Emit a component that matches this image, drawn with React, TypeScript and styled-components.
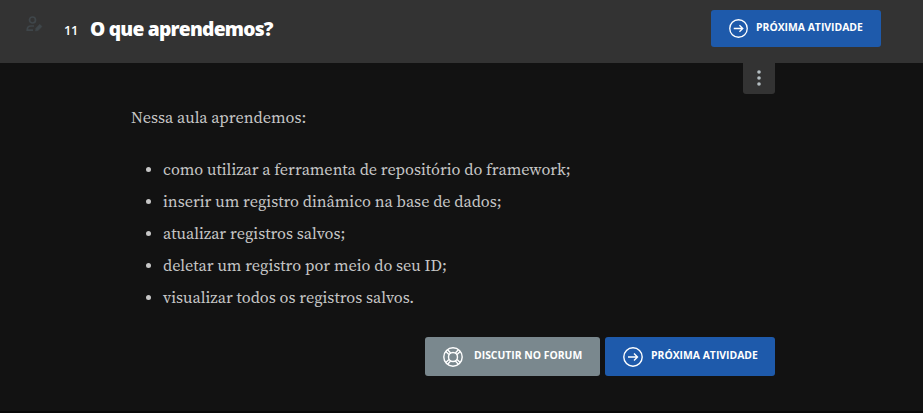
import React from "react";
import styled, { createGlobalStyle } from "styled-components";

const GlobalStyle = createGlobalStyle`
  * { box-sizing: border-box; }
  body { margin: 0; background: #121212; }
`;

const Page = styled.div`
  height: 413px;
  overflow: hidden;
  background: #121212;
  border-bottom: 2px solid #080808;
  font-family: "Open Sans", sans-serif;
`;

const Header = styled.header`
  display: flex;
  align-items: flex-start;
  height: 63px;
  padding: 10px 42px 0 25px;
  background: #333333;
`;

const EditorIcon = styled.svg`
  width: 18px;
  height: 18px;
  margin-top: 5px;
  flex: none;
`;

const Title = styled.h1`
  display: flex;
  align-items: baseline;
  flex: 1;
  margin: 5px 0 0 21px;
  color: #ffffff;
  font-size: 19.2px;
  line-height: 28px;
  font-weight: 800;
  letter-spacing: -0.75px;
`;

const TitleNumber = styled.span`
  position: relative;
  top: -1px;
  width: 26px;
  font-size: 12.8px;
  font-weight: 600;
  letter-spacing: -0.2px;
`;

const Button = styled.button<{ $tone: "primary" | "neutral"; $height: number; $width: number }>`
  display: flex;
  align-items: center;
  flex: none;
  width: ${({ $width }) => $width}px;
  height: ${({ $height }) => $height}px;
  padding: 0 0 0 18px;
  border: 0;
  border-radius: 3px;
  background: ${({ $tone }) => ($tone === "primary" ? "#1e5aab" : "#7a888e")};
  color: #ffffff;
  font: 700 10.4px/16px "Open Sans", sans-serif;
  white-space: nowrap;
`;

const ButtonIcon = styled.svg<{ $size: number; $gap: number }>`
  width: ${({ $size }) => $size}px;
  height: ${({ $size }) => $size}px;
  flex: none;
  margin-right: ${({ $gap }) => $gap}px;
  fill: none;
  stroke: currentColor;
  stroke-width: 1.4;
`;

const ButtonLabel = styled.span`
  margin-bottom: 3px;
`;

const Main = styled.main`
  width: 644px;
  margin-left: 131px;
`;

const MenuButton = styled.button`
  display: flex;
  align-items: center;
  justify-content: center;
  width: 32px;
  height: 31px;
  margin-left: auto;
  padding: 0 0 2px;
  border: 0;
  border-radius: 0 0 3px 3px;
  background: #333333;
`;

const Article = styled.article`
  padding-top: 7px;
  color: #c6c6c6;
  font: 16.2px/32px "Source Serif Pro", "Source Serif 4", "Liberation Serif", serif;
`;

const Intro = styled.p`
  margin: 0 0 20px;
`;

const List = styled.ul`
  margin: 0;
  padding: 0;
  list-style: none;
`;

const Item = styled.li`
  display: flex;
  align-items: center;
  height: 32px;
  padding-left: 15px;

  &::before {
    content: "";
    width: 5px;
    height: 5px;
    margin-right: 12px;
    border-radius: 50%;
    background: #c6c6c6;
  }
`;

const Actions = styled.div`
  display: flex;
  justify-content: flex-end;
  gap: 5px;
  margin-top: 24px;
`;

const topics = [
  "como utilizar a ferramenta de repositório do framework;",
  "inserir um registro dinâmico na base de dados;",
  "atualizar registros salvos;",
  "deletar um registro por meio do seu ID;",
  "visualizar todos os registros salvos.",
];

function NextButton({ height, iconSize }: { height: number; iconSize: number }) {
  return (
    <Button $tone="primary" $height={height} $width={170}>
      <ButtonIcon viewBox="0 0 20 20" $size={iconSize} $gap={8}>
        <circle cx="10" cy="10" r="9.2" />
        <path d="M5 10h9.5M11 6.5l3.5 3.5-3.5 3.5" />
      </ButtonIcon>
      <ButtonLabel>PRÓXIMA ATIVIDADE</ButtonLabel>
    </Button>
  );
}

function ForumButton() {
  return (
    <Button $tone="neutral" $height={39} $width={175}>
      <ButtonIcon viewBox="0 0 20 20" $size={20} $gap={11}>
        <circle cx="10" cy="10" r="9.2" />
        <circle cx="10" cy="10" r="4.5" />
        <path d="M6 7.6 2.8 4.6M7.6 6 4.6 2.8M12.4 6l3-3.2M14 7.6l3.2-3M14 12.4l3.2 3M12.4 14l3 3.2M7.6 14l-3 3.2M6 12.4l-3.2 3" />
      </ButtonIcon>
      <ButtonLabel>DISCUTIR NO FORUM</ButtonLabel>
    </Button>
  );
}

export default function App() {
  return (
    <Page>
      <GlobalStyle />
      <Header>
        <EditorIcon viewBox="0 0 18 18" fill="none" stroke="#3f464a" strokeWidth="1.7">
          <circle cx="7.5" cy="5" r="3" />
          <path d="M9 11H6C3.5 11 2.2 12.5 2.2 15.2H8" />
          <path d="M10.5 16l.4-2.8 3.9-3.9 2.2 2.2-3.9 3.9z" fill="#3f464a" strokeWidth="0.5" />
        </EditorIcon>
        <Title>
          <TitleNumber>11</TitleNumber>
          O que aprendemos?
        </Title>
        <NextButton height={37} iconSize={19} />
      </Header>
      <Main>
        <MenuButton aria-label="Menu">
          <svg width="4" height="16" viewBox="0 0 4 16" fill="#b5bec2">
            <circle cx="2" cy="2" r="1.8" />
            <circle cx="2" cy="8" r="1.8" />
            <circle cx="2" cy="14" r="1.8" />
          </svg>
        </MenuButton>
        <Article>
          <Intro>Nessa aula aprendemos:</Intro>
          <List>
            {topics.map((text) => (
              <Item key={text}>{text}</Item>
            ))}
          </List>
        </Article>
        <Actions>
          <ForumButton />
          <NextButton height={39} iconSize={20} />
        </Actions>
      </Main>
    </Page>
  );
}
